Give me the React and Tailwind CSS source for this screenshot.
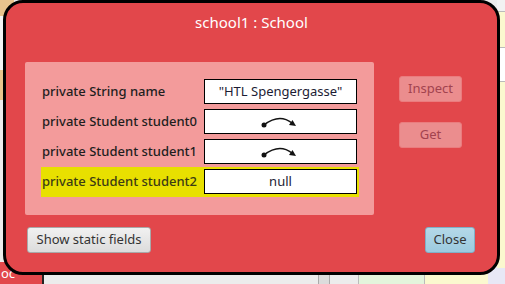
import React from 'react';

const fields = [
  { label: 'private String name', value: '"HTL Spengergasse"' },
  { label: 'private Student student0', ref: true },
  { label: 'private Student student1', ref: true },
  { label: 'private Student student2', value: 'null', selected: true },
];

// curved object-reference arrow
const RefArrow = () => (
  <svg width="40" height="14" viewBox="0 0 40 14">
    <circle cx="3" cy="10" r="2.5" fill="#111" />
    <path d="M3 10 C 12 3, 22 1, 31 8" stroke="#111" strokeWidth="1.5" fill="none" />
    <path d="M35 11 L 28 10 L 31.5 5 Z" fill="#111" />
  </svg>
);

const App = () => {
  return (
    <div className="relative w-[505px] h-[284px] overflow-hidden bg-[#ececec]" style={{ fontFamily: '"Noto Sans", "Open Sans", sans-serif' }}>
      {/* background window bits */}
      <div className="absolute left-0 top-0 w-[14px] h-[16px] bg-[#e8c48e]" />
      <div className="absolute left-0 top-[16px] w-[4px] h-[80px] bg-[#f4f4f4] border-b border-[#333]" />
      <div className="absolute left-0 top-[70px] w-[4px] h-[30px] bg-[#e8c48e]" />
      <div className="absolute left-0 top-[262px] w-[42px] h-[22px] bg-[#e2474b] text-white text-[13px] pl-[1px] leading-[22px]">oc</div>
      <div className="absolute left-[42px] top-[268px] w-[2px] h-[16px] bg-[#222]" />
      <div className="absolute left-[318px] top-[268px] w-[12px] h-[16px] bg-[#dcdcdc] border-x border-[#aaa]" />
      <div className="absolute left-[358px] top-[268px] w-[66px] h-[16px] bg-[#e3f5dc] border-l border-[#bbb]" />
      <div className="absolute left-[424px] top-[268px] w-[64px] h-[16px] bg-[#fbf9cf] border-l border-[#bbb]" />
      <div className="absolute left-[488px] top-[268px] w-[17px] h-[16px] bg-[#e8e8f6]" />
      <div className="absolute right-0 top-0 w-[8px] h-[268px] bg-[#fbf9cf]">
        <div className="h-[12px] bg-[#f2f2f2] border-b border-[#bbb]" />
        <div className="h-[36px] border-b border-[#bbb]" />
        <div className="h-[34px] bg-white border-b border-[#bbb]" />
      </div>

      {/* inspector dialog */}
      <div className="absolute left-[3px] top-0 w-[497px] h-[275px] rounded-[20px] border-[3px] border-black bg-[#e2474b] flex flex-col">
        <div className="h-[40px] pt-[8px] text-center text-white text-[15px] leading-[22px]">school1 : School</div>

        <div className="flex mt-[19px] pl-[19px]">
          <div className="w-[349px] h-[153px] bg-[#f39b9b] rounded-[2px] pt-[15px] pl-[16px]">
            {fields.map((f) => (
              <div key={f.label} className={`flex w-[318px] h-[30px] pl-[1px] pr-[2px] pt-[2px] ${f.selected ? 'bg-[#e8e000]' : ''}`}>
                <div className={`w-[162px] h-[25px] flex items-center text-[13px] font-medium ${f.selected ? 'text-[#3c3c14]' : 'text-[#1e1e1e]'}`}>{f.label}</div>
                <div className="w-[153px] h-[25px] bg-white border border-black flex items-center justify-center text-[13px] text-[#1c1c34]">
                  {f.ref ? <RefArrow /> : f.value}
                </div>
              </div>
            ))}
          </div>

          <div className="flex flex-col ml-[25px] pt-[14px] gap-[20px]">
            <button className="w-[63px] h-[26px] rounded-[3px] border border-[#ea7c7e] bg-[#eb8d8e] text-[13px] text-[#a2434f]">Inspect</button>
            <button className="w-[63px] h-[26px] rounded-[3px] border border-[#ea7c7e] bg-[#eb8d8e] text-[13px] text-[#a2434f]">Get</button>
          </div>
        </div>

        <div className="flex justify-between mt-[12px] pl-[21px] pr-[22px]">
          <button className="w-[124px] h-[26px] rounded-[3px] border border-[#a9a9a9] bg-gradient-to-b from-[#f1f1f1] to-[#dcdcdc] text-[13px] text-[#333]">Show static fields</button>
          <button className="w-[50px] h-[26px] rounded-[3px] border border-[#7fb0c8] bg-gradient-to-b from-[#b4d8e8] to-[#9ccadf] text-[13px] text-[#333]">Close</button>
        </div>
      </div>
    </div>
  );
};

export default App;
